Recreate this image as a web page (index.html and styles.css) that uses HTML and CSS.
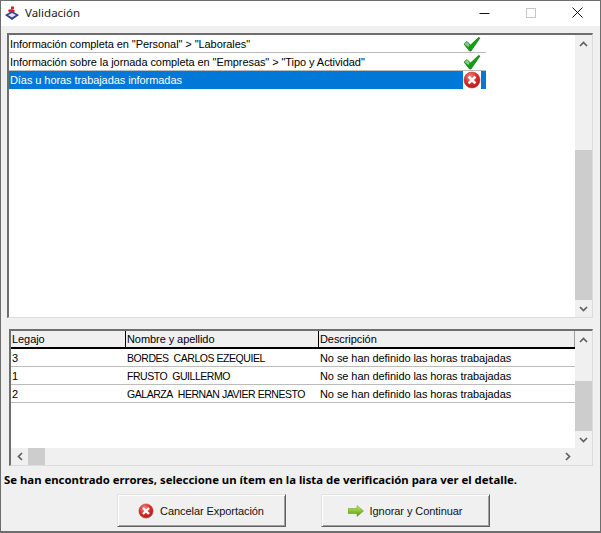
FILE: index.html
```html
<!DOCTYPE html>
<html lang="es">
<head>
<meta charset="utf-8">
<title>Validación</title>
<link rel="stylesheet" href="styles.css">
</head>
<body>
<svg class="defs" width="0" height="0" aria-hidden="true">
  <defs>
    <radialGradient id="redball" cx="40%" cy="30%" r="75%">
      <stop offset="0" stop-color="#f58a80"/>
      <stop offset="0.55" stop-color="#dc2a26"/>
      <stop offset="1" stop-color="#a81c1c"/>
    </radialGradient>
    <linearGradient id="arrowfill" x1="0" y1="0" x2="0" y2="1">
      <stop offset="0" stop-color="#c8ec5c"/>
      <stop offset="1" stop-color="#4f9a12"/>
    </linearGradient>
    <symbol id="check" viewBox="0 0 18 16">
      <path d="M1 8 L4 5.5 L7.5 9 L15.5 1.5 L17 2 L8 15 L6.5 15 Z" fill="#10a010" stroke="#0b5f0b" stroke-width=".6"/>
      <path d="M1.5 8 L4 6 L6.5 9 L5.5 11 Z" fill="#8fcf8f"/>
    </symbol>
    <symbol id="err" viewBox="0 0 18 18">
      <circle cx="9" cy="9" r="8" fill="url(#redball)" stroke="#b9403c" stroke-width=".6"/>
      <path d="M6.5 6.5 L11.5 11.5 M11.5 6.5 L6.5 11.5" stroke="#fff" stroke-width="2.6" stroke-linecap="square"/>
    </symbol>
    <symbol id="up" viewBox="0 0 9 6"><path d="M1 5 L4.5 1.5 L8 5" fill="none" stroke="#606060" stroke-width="1.7"/></symbol>
    <symbol id="down" viewBox="0 0 9 6"><path d="M1 1 L4.5 4.5 L8 1" fill="none" stroke="#606060" stroke-width="1.7"/></symbol>
    <symbol id="left" viewBox="0 0 6 9"><path d="M5 1 L1.5 4.5 L5 8" fill="none" stroke="#606060" stroke-width="1.7"/></symbol>
    <symbol id="right" viewBox="0 0 6 9"><path d="M1 1 L4.5 4.5 L1 8" fill="none" stroke="#606060" stroke-width="1.7"/></symbol>
  </defs>
</svg>

<div class="window">
  <header class="titlebar">
    <svg class="logo" width="16" height="16" viewBox="0 0 16 16">
      <path d="M1 10 L8 6 L15 10 L8 15 Z" fill="#2a3f8f"/>
      <path d="M4 10 L8 8 L12 10 L8 12.5 Z" fill="#dfe4f2"/>
      <path d="M7 1.5 h3 v2.5 h-3 Z" fill="#d02030"/>
      <path d="M4 5 C6 3.5 10 4 11 6 L9 8 C8 6.5 6 6.5 5 7.5 Z" fill="#c8202c"/>
    </svg>
    <span class="title">Validación</span>
    <div class="controls">
      <svg width="11" height="11" viewBox="0 0 11 11"><path d="M0.5 6.5 H10.5" stroke="#111" stroke-width="1"/></svg>
      <svg width="10" height="10" viewBox="0 0 10 10"><rect x=".5" y=".5" width="9" height="9" fill="none" stroke="#c6c6c6"/></svg>
      <svg width="11" height="11" viewBox="0 0 11 11"><path d="M.5 .5 L10.5 10.5 M10.5 .5 L.5 10.5" stroke="#111" stroke-width="1"/></svg>
    </div>
  </header>

  <main class="client">
    <section class="panel checks">
      <div class="panel-body">
        <ul class="checklist">
          <li class="check-row"><span class="check-text">Información completa en "Personal" &gt; "Laborales"</span><span class="check-icon"><svg width="18" height="16"><use href="#check"/></svg></span></li>
          <li class="check-row"><span class="check-text">Información sobre la jornada completa en "Empresas" &gt; "Tipo y Actividad"</span><span class="check-icon"><svg width="18" height="16"><use href="#check"/></svg></span></li>
          <li class="check-row selected"><span class="check-text">Días u horas trabajadas informadas</span><span class="check-icon white"><svg width="18" height="18"><use href="#err"/></svg></span></li>
        </ul>
      </div>
      <div class="vscroll">
        <span class="arrow"><svg width="9" height="6"><use href="#up"/></svg></span>
        <div class="track track-a"><div class="thumb"></div></div>
        <span class="arrow"><svg width="9" height="6"><use href="#down"/></svg></span>
      </div>
    </section>

    <section class="panel details">
      <div class="grid-main">
        <div class="panel-body">
          <div class="grid-row head"><span class="c1">Legajo</span><span class="c2">Nombre y apellido</span><span class="c3">Descripción</span></div>
          <div class="grid-row"><span class="c1">3</span><span class="c2 name">BORDES&nbsp; CARLOS EZEQUIEL</span><span class="c3">No se han definido las horas trabajadas</span></div>
          <div class="grid-row"><span class="c1">1</span><span class="c2 name">FRUSTO&nbsp; GUILLERMO</span><span class="c3">No se han definido las horas trabajadas</span></div>
          <div class="grid-row"><span class="c1">2</span><span class="c2 name">GALARZA&nbsp; HERNAN JAVIER ERNESTO</span><span class="c3">No se han definido las horas trabajadas</span></div>
        </div>
        <div class="vscroll">
          <span class="arrow"><svg width="9" height="6"><use href="#up"/></svg></span>
          <div class="track track-b"><div class="thumb"></div></div>
          <span class="arrow"><svg width="9" height="6"><use href="#down"/></svg></span>
        </div>
      </div>
      <div class="hscroll">
        <span class="harrow"><svg width="6" height="9"><use href="#left"/></svg></span>
        <div class="hthumb"></div>
        <span class="harrow end"><svg width="6" height="9"><use href="#right"/></svg></span>
      </div>
    </section>

    <p class="message">Se han encontrado errores, seleccione un ítem en la lista de verificación para ver el detalle.</p>

    <div class="actions">
      <button class="btn" type="button"><svg width="16" height="16"><use href="#err"/></svg><span>Cancelar Exportación</span></button>
      <button class="btn" type="button">
        <svg width="16" height="12" viewBox="0 0 16 12"><path d="M0 3.5 H9 V.5 L15.5 6 L9 11.5 V8.5 H0 Z" fill="url(#arrowfill)" stroke="#5f9a20" stroke-width=".5"/></svg>
        <span>Ignorar y Continuar</span>
      </button>
    </div>
  </main>
</div>
</body>
</html>
```

FILE: styles.css
```css
* { box-sizing: border-box; }
html, body { margin: 0; padding: 0; }
body { font-family: "Liberation Sans", Arial, sans-serif; font-size: 11px; letter-spacing: -0.07px; color: #000; }
.defs { position: absolute; }
ul { list-style: none; margin: 0; padding: 0; }

.window {
  width: 601px; height: 533px;
  border: 1px solid #6e6e6e; border-bottom-width: 2px;
  background: #f0f0f0;
  display: flex; flex-direction: column;
}

.titlebar {
  height: 25px; flex: none; background: #fff;
  display: flex; align-items: center; padding: 0 0 2px 3px;
}
.logo { margin-right: 5px; }
.title { font-family: "Noto Sans", sans-serif; font-size: 11.5px; letter-spacing: 0; color: #1a1a1a; }
.controls { margin-left: auto; display: flex; align-items: center; gap: 36px; padding-right: 17px; }

.client { flex: 1; display: flex; flex-direction: column; padding: 7px 7px 0 6px; }

.panel {
  border: 1px solid #f8f8f8;
  border-top: 2px solid #6e6e6e;
  border-left: 2px solid #6e6e6e;
  border-right-color: #dcdcdc;
  border-bottom-color: #dcdcdc;
  background: #fff;
}

.panel-body { flex: 1; min-width: 0; background: #fff; }

.checks { height: 285px; display: flex; }
.checklist { width: 477px; }
.check-row {
  height: 18px; display: flex; align-items: center;
  border-bottom: 1px solid #bcbcbc; padding-left: 1px;
}
.check-text { flex: 1; white-space: nowrap; }
.check-icon { width: 23px; height: 100%; display: flex; align-items: center; justify-content: center; flex: none; padding-right: 5px; }
.check-row.selected { background: #0078d7; color: #fff; border-bottom: 0; }
.check-row.selected .check-text { padding-bottom: 1px; }
.check-icon.white { background: #fff; width: 18px; margin-right: 5px; padding-right: 0; overflow: hidden; }

.vscroll { width: 17px; flex: none; background: #f0f0f0; display: flex; flex-direction: column; }
.arrow { height: 17px; flex: none; display: flex; align-items: center; justify-content: center; }
.track { flex: 1; display: flex; flex-direction: column; justify-content: flex-end; }
.thumb { background: #cdcdcd; width: 100%; }
.track-a .thumb { height: 150px; }
.track-b { justify-content: flex-start; }
.track-b .thumb { height: 50px; margin-top: 33px; }

.details { margin: 11px 0 0 2px; height: 137px; display: flex; flex-direction: column; }
.grid-main { flex: 1; display: flex; min-height: 0; }
.grid-row { display: flex; height: 18px; border-bottom: 1px solid #bcbcbc; align-items: center; }
.grid-row span { padding-left: 1px; white-space: nowrap; overflow: hidden; height: 100%; display: flex; align-items: center; }
.c1 { width: 115px; }
.c2 { width: 193px; }
.c3 { flex: 1; }
.grid-row span.c2, .grid-row span.c3 { padding-left: 1px; }
.grid-row span.name { font-size: 10.5px; letter-spacing: -0.45px; }
.grid-row.head { background: #f0f0f0; border-bottom: 2px solid #000; }
.head .c1, .head .c2 { border-right: 1px solid #000; }
.head .c3 { border-right: 1px solid #a0a0a0; }

.hscroll { height: 17px; flex: none; background: #f0f0f0; display: flex; align-items: center; }
.harrow { width: 17px; display: flex; justify-content: center; align-items: center; flex: none; }
.harrow.end { margin-left: auto; margin-right: 16px; }
.hthumb { width: 17px; height: 17px; background: #cdcdcd; }

.message { margin: 6px 0 0 -3px; font-family: "Noto Sans", sans-serif; font-weight: 700; font-size: 11.35px; letter-spacing: 0; white-space: nowrap; line-height: 16px; }

.actions { display: flex; justify-content: center; gap: 35px; margin-top: 6px; padding-left: 6px; }
.btn {
  width: 169px; height: 33px; background: #f0f0f0; padding: 0;
  border: 1px solid; border-color: #e2e2e2 #5f5f5f #5f5f5f #e2e2e2;
  box-shadow: inset 1px 1px 0 #fff, inset -1px -1px 0 #a0a0a0;
  display: flex; align-items: center; justify-content: center; gap: 6px;
  font: inherit; letter-spacing: inherit; color: #111;
}
```
